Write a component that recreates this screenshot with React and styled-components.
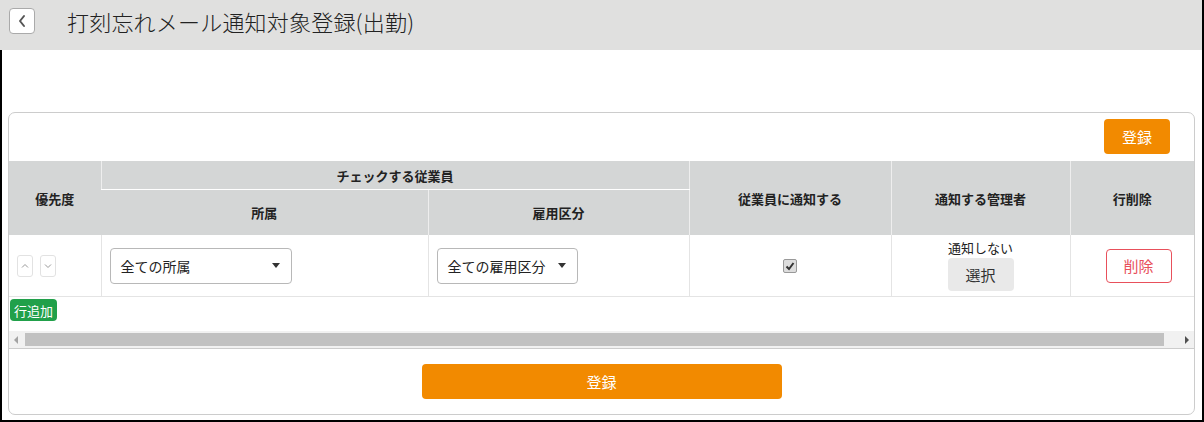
import React from "react";
import styled, { createGlobalStyle } from "styled-components";

const GlobalStyle = createGlobalStyle`
  html, body {
    margin: 0;
    padding: 0;
    background: #fff;
  }
  body {
    font-family: "Noto Sans CJK JP", "Noto Sans", sans-serif;
    color: #333;
  }
`;

const Frame = styled.div`
  width: 1204px;
  height: 422px;
  box-sizing: border-box;
  border-right: 2px solid #000;
  display: flex;
  flex-direction: column;
`;

const Header = styled.header`
  height: 50px;
  background: #e0e0df;
  display: flex;
  align-items: center;
  padding-left: 9px;
  flex-shrink: 0;
`;

const BackButton = styled.button`
  width: 26px;
  height: 26px;
  box-sizing: border-box;
  border: 1px solid #aaa;
  border-radius: 4px;
  background: #fff;
  display: flex;
  align-items: center;
  justify-content: center;
  padding: 0;
  margin-top: -8px;
`;

const Title = styled.h1`
  margin: -8px 0 0 32px;
  font-size: 22px;
  font-weight: 300;
  color: #222;
  letter-spacing: 0.2px;
`;

const Body = styled.main`
  flex: 1;
  border-left: 2px solid #000;
  border-bottom: 2px solid #000;
  padding: 62px 7px 5px 6px;
  box-sizing: border-box;
`;

const Card = styled.section`
  border: 1px solid #ccc;
  border-radius: 7px;
  height: 303px;
  box-sizing: border-box;
  display: flex;
  flex-direction: column;
`;

const TopBar = styled.div`
  display: flex;
  justify-content: flex-end;
  padding: 6px 24px 7px 0;
`;

const OrangeButton = styled.button`
  background: #f28a00;
  color: #fff;
  border: none;
  border-radius: 4px;
  font-family: inherit;
  font-size: 15px;
  width: ${(p) => (p.$wide ? "360px" : "66px")};
  height: 35px;
  padding: 0;
`;

const Table = styled.table`
  border-collapse: collapse;
  width: 100%;
  table-layout: fixed;
  font-size: 13px;
`;

const Th = styled.th`
  background: #d4d6d6;
  color: #222;
  font-weight: 700;
  font-size: 13px;
  border-left: 1px solid #eee;
  border-bottom: ${(p) => (p.$split ? "1px solid #fff" : "none")};
  height: ${(p) => (p.$h ? `${p.$h}px` : "auto")};
  padding: 0;
  vertical-align: middle;
  &:first-child {
    border-left: none;
  }
`;

const Td = styled.td`
  border-left: 1px solid #e4e4e4;
  border-bottom: 1px solid #e4e4e4;
  height: 61px;
  padding: 0 8px 0 ${(p) => p.$pl ?? 8}px;
  text-align: ${(p) => p.$align || "left"};
  vertical-align: middle;
  &:first-child {
    border-left: none;
  }
`;

const ArrowPair = styled.div`
  display: flex;
  gap: 7px;
`;

const ArrowButton = styled.button`
  width: 16px;
  height: 22px;
  border: 1px solid #e2e2e2;
  border-radius: 3px;
  background: #fff;
  padding: 0;
  display: flex;
  align-items: center;
  justify-content: center;
`;

const SelectBox = styled.div`
  width: ${(p) => p.$w}px;
  height: 36px;
  box-sizing: border-box;
  border: 1px solid #b8b8b8;
  border-radius: 4px;
  display: flex;
  align-items: center;
  justify-content: space-between;
  padding: 0 11px 0 10px;
  font-size: 14px;
  color: #222;
`;

const Caret = styled.span`
  width: 0;
  height: 0;
  border-left: 4px solid transparent;
  border-right: 4px solid transparent;
  border-top: 5px solid #333;
`;

const CheckBox = styled.span`
  display: inline-flex;
  width: 12px;
  height: 12px;
  border: 1px solid #999;
  border-radius: 2px;
  background: #ddd;
  align-items: center;
  justify-content: center;
`;

const ManagerCell = styled.div`
  display: flex;
  flex-direction: column;
  align-items: center;
  gap: 1px;
  font-size: 13px;
  color: #222;
  margin-top: -2px;
`;

const GrayButton = styled.button`
  width: 66px;
  height: 33px;
  background: #e9e9e9;
  border: none;
  border-radius: 4px;
  font-family: inherit;
  font-size: 15px;
  color: #333;
  padding: 0;
`;

const DeleteButton = styled.button`
  width: 66px;
  height: 34px;
  background: #fff;
  border: 1px solid #e8505b;
  border-radius: 4px;
  font-family: inherit;
  font-size: 15px;
  color: #e8505b;
  padding: 0;
`;

const AddRow = styled.div`
  display: flex;
  align-items: flex-start;
  padding: 2px 0 0 1px;
  height: 34px;
  box-sizing: border-box;
`;

const GreenBadge = styled.span`
  display: inline-flex;
  align-items: center;
  height: 22px;
  background: #21a04a;
  color: #fff;
  font-size: 13px;
  padding: 0 4px;
  border-radius: 4px;
`;

const ScrollTrack = styled.div`
  height: 17px;
  background: #f1f1f1;
  display: flex;
  align-items: center;
  border-bottom: 1px solid #ccc;
`;

const ScrollThumb = styled.div`
  width: 1139px;
  height: 13px;
  background: #c1c1c1;
  margin-left: 2px;
  margin-right: auto;
`;

const ScrollArrow = styled.span`
  width: 14px;
  display: flex;
  justify-content: center;
  &::before {
    content: "";
    border-top: 4px solid transparent;
    border-bottom: 4px solid transparent;
    ${(p) =>
      p.$right
        ? "border-left: 4px solid #505050;"
        : "border-right: 4px solid #a3a3a3;"}
  }
`;

const Footer = styled.div`
  flex: 1;
  display: flex;
  justify-content: center;
  padding-top: 15px;
`;

export default function App() {
  return (
    <>
      <GlobalStyle />
      <Frame>
        <Header>
          <BackButton>
            <svg width="10" height="14" viewBox="0 0 10 14">
              <path d="M7 2 L3 7 L7 12" fill="none" stroke="#555" strokeWidth="2" strokeLinecap="round" strokeLinejoin="round" />
            </svg>
          </BackButton>
          <Title>打刻忘れメール通知対象登録(出勤)</Title>
        </Header>
        <Body>
          <Card>
            <TopBar>
              <OrangeButton>登録</OrangeButton>
            </TopBar>
            <Table>
              <colgroup>
                <col style={{ width: 92 }} />
                <col style={{ width: 327 }} />
                <col style={{ width: 261 }} />
                <col style={{ width: 202 }} />
                <col style={{ width: 179 }} />
                <col />
              </colgroup>
              <thead>
                <tr>
                  <Th rowSpan={2}>優先度</Th>
                  <Th colSpan={2} $split $h={28}>チェックする従業員</Th>
                  <Th rowSpan={2}>従業員に通知する</Th>
                  <Th rowSpan={2}>通知する管理者</Th>
                  <Th rowSpan={2}>行削除</Th>
                </tr>
                <tr>
                  <Th $h={45}>所属</Th>
                  <Th $h={45}>雇用区分</Th>
                </tr>
              </thead>
              <tbody>
                <tr>
                  <Td>
                    <ArrowPair>
                      <ArrowButton>
                        <svg width="8" height="6" viewBox="0 0 8 6">
                          <path d="M1 4.5 L4 1.5 L7 4.5" fill="none" stroke="#999" strokeWidth="1" />
                        </svg>
                      </ArrowButton>
                      <ArrowButton>
                        <svg width="8" height="6" viewBox="0 0 8 6">
                          <path d="M1 1.5 L4 4.5 L7 1.5" fill="none" stroke="#999" strokeWidth="1" />
                        </svg>
                      </ArrowButton>
                    </ArrowPair>
                  </Td>
                  <Td>
                    <SelectBox $w={182}>
                      全ての所属
                      <Caret />
                    </SelectBox>
                  </Td>
                  <Td>
                    <SelectBox $w={141}>
                      全ての雇用区分
                      <Caret />
                    </SelectBox>
                  </Td>
                  <Td $align="center">
                    <CheckBox>
                      <svg width="10" height="10" viewBox="0 0 10 10">
                        <path d="M1.5 5.5 L4 8 L8.5 2" fill="none" stroke="#333" strokeWidth="2" />
                      </svg>
                    </CheckBox>
                  </Td>
                  <Td $align="center">
                    <ManagerCell>
                      通知しない
                      <GrayButton>選択</GrayButton>
                    </ManagerCell>
                  </Td>
                  <Td $pl={35}>
                    <DeleteButton>削除</DeleteButton>
                  </Td>
                </tr>
              </tbody>
            </Table>
            <AddRow>
              <GreenBadge>行追加</GreenBadge>
            </AddRow>
            <ScrollTrack>
              <ScrollArrow />
              <ScrollThumb />
              <ScrollArrow $right />
            </ScrollTrack>
            <Footer>
              <OrangeButton $wide>登録</OrangeButton>
            </Footer>
          </Card>
        </Body>
      </Frame>
    </>
  );
}
